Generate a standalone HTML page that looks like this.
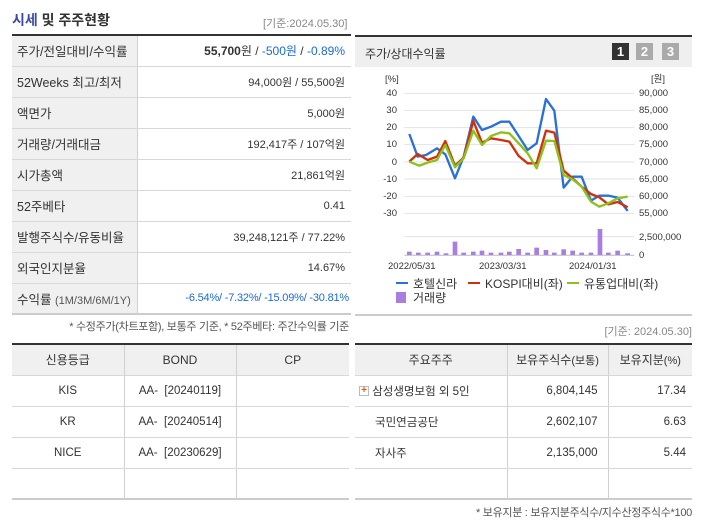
<!DOCTYPE html>
<html><head><meta charset="utf-8"><style>
*{margin:0;padding:0;box-sizing:border-box}
body{width:702px;height:525px;background:#fff;font-family:"Liberation Sans","Noto Sans CJK KR",sans-serif;color:#333;position:relative;overflow:hidden;font-size:12px}
.a{position:absolute}
table{border-collapse:collapse;position:absolute;table-layout:fixed}
td{height:31px;border-bottom:1px solid #d8d8d8;font-size:12px;white-space:nowrap}
.l td.k{background:#f0f0f0;border-right:1px solid #d0d0d0;padding-left:5px;font-size:12.5px}
.l td.v{text-align:right;padding-right:6px;font-size:11px}
.b{color:#1a6ad8}
.g td,.g th{border-right:1px solid #d0d0d0;text-align:center}
.g td{font-size:11.5px}
.g td:last-child,.g th:last-child{border-right:none}
.g th{height:31px;background:#f0f0f0;font-weight:normal;font-size:12px;border-bottom:1px solid #d8d8d8}
</style></head><body>
<div class="a" style="left:12px;top:10px;font-size:14px;font-weight:bold;color:#333"><span style="color:#3b4aa6">시세</span> 및 주주현황</div>
<div class="a" style="left:263px;top:15px;font-size:11px;color:#888">[기준:2024.05.30]</div>
<table class="l" style="left:12px;top:34px;width:339px;border-top:2px solid #333;border-bottom:2px solid #ccc">
<col style="width:125px"><col>
<tr><td class="k">주가/전일대비/수익률</td><td class="v" style="font-size:12px"><b>55,700</b>원 / <span class="b">-500원</span> / <span class="b">-0.89%</span></td></tr>
<tr><td class="k">52Weeks 최고/최저</td><td class="v">94,000원 / 55,500원</td></tr>
<tr><td class="k">액면가</td><td class="v">5,000원</td></tr>
<tr><td class="k">거래량/거래대금</td><td class="v">192,417주 / 107억원</td></tr>
<tr><td class="k">시가총액</td><td class="v">21,861억원</td></tr>
<tr><td class="k">52주베타</td><td class="v">0.41</td></tr>
<tr><td class="k">발행주식수/유동비율</td><td class="v">39,248,121주 / 77.22%</td></tr>
<tr><td class="k">외국인지분율</td><td class="v">14.67%</td></tr>
<tr><td class="k">수익률 <span style="font-size:11px;color:#555">(1M/3M/6M/1Y)</span></td><td class="v b" style="font-size:11px;letter-spacing:-0.2px;padding-right:2px">-6.54%/ -7.32%/ -15.09%/ -30.81%</td></tr>
</table>
<div class="a" style="right:353px;top:318px;font-size:11px;color:#555;letter-spacing:-0.3px">* 수정주가(차트포함), 보통주 기준, * 52주베타: 주간수익률 기준</div>

<div class="a" style="left:355px;top:35px;width:337px;height:281px;border-top:2px solid #333;border-bottom:2px solid #ccc"></div>
<div class="a" style="left:355px;top:37px;width:337px;height:30px;background:#efefef"></div>
<div class="a" style="left:365px;top:45px;font-size:12px">주가/상대수익률</div>
<div class="a" style="left:612px;top:43px;width:17px;height:17px;background:#333;color:#fff;font-weight:bold;text-align:center;font-size:13px;line-height:17px">1</div>
<div class="a" style="left:636px;top:43px;width:17px;height:17px;background:#aaa;color:#fff;font-weight:bold;text-align:center;font-size:13px;line-height:17px">2</div>
<div class="a" style="left:662px;top:43px;width:17px;height:17px;background:#aaa;color:#fff;font-weight:bold;text-align:center;font-size:13px;line-height:17px">3</div>
<svg class="a" style="left:0;top:0" width="702" height="525">
<g font-family="Liberation Sans,Noto Sans CJK KR,sans-serif" font-size="9.5" fill="#333">
<text x="385" y="82">[%]</text><text x="651" y="82">[원]</text>
<g text-anchor="end"><text x="397" y="96">40</text><text x="397" y="113">30</text><text x="397" y="130">20</text><text x="397" y="147">10</text><text x="397" y="165">0</text><text x="397" y="182">-10</text><text x="397" y="199">-20</text><text x="397" y="216">-30</text></g>
<g><text x="639" y="96">90,000</text><text x="639" y="113">85,000</text><text x="639" y="130">80,000</text><text x="639" y="147">75,000</text><text x="639" y="165">70,000</text><text x="639" y="182">65,000</text><text x="639" y="199">60,000</text><text x="639" y="216">55,000</text><text x="639" y="240">2,500,000</text><text x="639" y="258">0</text></g>
<text x="388" y="269">2022/05/31</text><text x="479" y="269">2023/03/31</text><text x="569" y="269">2024/01/31</text>
</g>
<g transform="translate(351,30) scale(0.3333)">
<g stroke="#e2e2e2" stroke-width="3"><line x1="160" x2="850" y1="190" y2="190"/><line x1="160" x2="850" y1="241" y2="241"/><line x1="160" x2="850" y1="293" y2="293"/><line x1="160" x2="850" y1="344" y2="344"/><line x1="160" x2="850" y1="396" y2="396"/><line x1="160" x2="850" y1="447" y2="447"/><line x1="160" x2="850" y1="499" y2="499"/><line x1="160" x2="850" y1="550" y2="550"/><line x1="160" x2="850" y1="620" y2="620"/></g>
<line x1="160" x2="850" y1="676" y2="676" stroke="#bbb" stroke-width="3"/>
<g fill="#a97ee0"><rect x="168" y="665" width="14" height="10"/><rect x="195" y="668" width="14" height="7"/><rect x="223" y="668" width="14" height="7"/><rect x="251" y="665" width="14" height="10"/><rect x="278" y="670" width="14" height="5"/><rect x="305" y="635" width="14" height="40"/><rect x="331" y="668" width="14" height="7"/><rect x="360" y="665" width="14" height="10"/><rect x="386" y="662" width="14" height="13"/><rect x="413" y="668" width="14" height="7"/><rect x="443" y="668" width="14" height="7"/><rect x="468" y="665" width="14" height="10"/><rect x="496" y="657" width="14" height="18"/><rect x="523" y="668" width="14" height="7"/><rect x="550" y="653" width="14" height="22"/><rect x="578" y="660" width="14" height="15"/><rect x="603" y="668" width="14" height="7"/><rect x="631" y="658" width="14" height="17"/><rect x="658" y="662" width="14" height="13"/><rect x="685" y="668" width="14" height="7"/><rect x="713" y="668" width="14" height="7"/><rect x="740" y="597" width="14" height="78"/><rect x="765" y="668" width="14" height="7"/><rect x="793" y="662" width="14" height="13"/><rect x="823" y="670" width="14" height="5"/></g>
<g fill="none" stroke-width="7" stroke-linejoin="round">
<polyline stroke="#2b6fd8" points="175,312 200,380 225,375 258,355 283,373 312,445 338,380 367,260 393,300 420,290 450,275 475,275 503,318 530,360 557,340 585,207 610,242 638,473 665,440 692,440 720,512 745,497 772,497 800,503 830,543"/>
<polyline stroke="#d0310c" points="175,395 200,372 230,390 258,380 283,333 312,407 338,383 367,273 393,338 420,325 450,330 475,335 503,378 530,400 557,400 585,302 610,308 638,422 665,445 692,470 720,492 745,502 772,523 800,516 830,532"/>
<polyline stroke="#8cc21c" points="175,395 205,407 230,398 258,390 283,345 312,412 338,385 367,302 393,345 420,318 450,307 475,310 503,340 530,370 557,415 585,332 610,333 638,435 665,448 692,470 720,515 745,530 772,520 800,505 830,500"/>
</g></g>
<g font-family="Liberation Sans,Noto Sans CJK KR,sans-serif" font-size="12" fill="#333">
<rect x="396" y="282" width="12" height="2" fill="#2b6fd8"/><text x="413" y="288">호텔신라</text>
<rect x="468" y="282" width="12" height="2" fill="#d0310c"/><text x="485" y="288">KOSPI대비(좌)</text>
<rect x="567" y="282" width="12" height="2" fill="#8cc21c"/><text x="584" y="288">유통업대비(좌)</text>
<rect x="396" y="292" width="10" height="11" fill="#a97ee0"/><text x="413" y="302">거래량</text>
</g>
</svg>
<div class="a" style="right:10px;top:323px;font-size:11px;color:#888">[기준: 2024.05.30]</div>

<table class="g" style="left:12px;top:343px;width:337px;border-top:2px solid #333;border-bottom:2px solid #ccc">
<col style="width:112px"><col style="width:112px"><col>
<tr><th>신용등급</th><th>BOND</th><th>CP</th></tr>
<tr><td>KIS</td><td>AA- &nbsp;[20240119]</td><td></td></tr>
<tr><td>KR</td><td>AA- &nbsp;[20240514]</td><td></td></tr>
<tr><td>NICE</td><td>AA- &nbsp;[20230629]</td><td></td></tr>
<tr><td></td><td></td><td></td></tr>
</table>
<table class="g" style="left:355px;top:343px;width:337px;border-top:2px solid #333;border-bottom:2px solid #ccc">
<col style="width:152px"><col style="width:101px"><col>
<tr><th>주요주주</th><th>보유주식수<span style="font-size:11px">(보통)</span></th><th>보유지분<span style="font-size:11px">(%)</span></th></tr>
<tr><td style="text-align:left;padding-left:4px"><span style="display:inline-block;width:10px;height:10px;border:1px solid #bbb;color:#e85a10;font-size:10px;line-height:8px;text-align:center;vertical-align:middle;font-weight:bold">+</span> 삼성생명보험 외 5인</td><td style="text-align:right;padding-right:10px">6,804,145</td><td style="text-align:right;padding-right:6px">17.34</td></tr>
<tr><td style="text-align:left;padding-left:20px">국민연금공단</td><td style="text-align:right;padding-right:10px">2,602,107</td><td style="text-align:right;padding-right:6px">6.63</td></tr>
<tr><td style="text-align:left;padding-left:20px">자사주</td><td style="text-align:right;padding-right:10px">2,135,000</td><td style="text-align:right;padding-right:6px">5.44</td></tr>
<tr><td></td><td></td><td></td></tr>
</table>
<div class="a" style="right:10px;top:504px;font-size:11px;color:#555;letter-spacing:-0.3px">* 보유지분 : 보유지분주식수/지수산정주식수*100</div>
</body></html>
